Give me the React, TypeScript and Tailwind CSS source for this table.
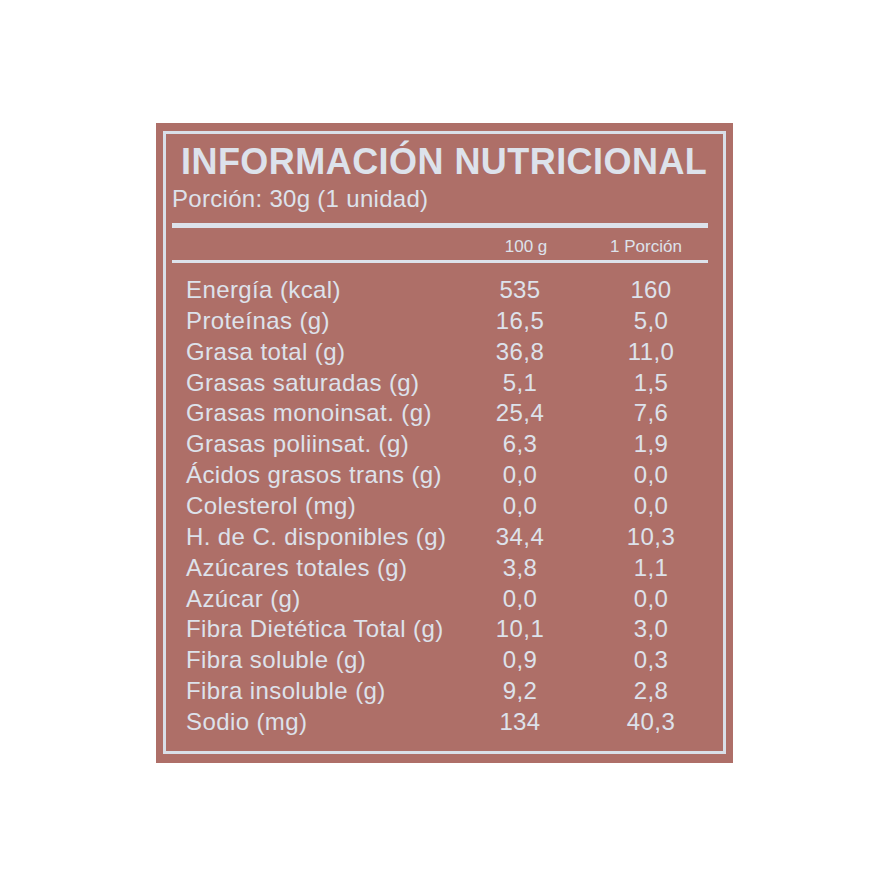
const rows: [string, string, string][] = [
  ["Energía (kcal)", "535", "160"],
  ["Proteínas (g)", "16,5", "5,0"],
  ["Grasa total (g)", "36,8", "11,0"],
  ["Grasas saturadas (g)", "5,1", "1,5"],
  ["Grasas monoinsat. (g)", "25,4", "7,6"],
  ["Grasas poliinsat. (g)", "6,3", "1,9"],
  ["Ácidos grasos trans (g)", "0,0", "0,0"],
  ["Colesterol (mg)", "0,0", "0,0"],
  ["H. de C. disponibles (g)", "34,4", "10,3"],
  ["Azúcares totales (g)", "3,8", "1,1"],
  ["Azúcar (g)", "0,0", "0,0"],
  ["Fibra Dietética Total (g)", "10,1", "3,0"],
  ["Fibra soluble (g)", "0,9", "0,3"],
  ["Fibra insoluble (g)", "9,2", "2,8"],
  ["Sodio (mg)", "134", "40,3"],
]

export default function App() {
  return (
    <div
      className="min-h-[886px] bg-white pl-[156px] pt-[123px]"
      style={{ fontFamily: '"Liberation Sans", Arial, sans-serif' }}
    >
      <div className="w-[577px] bg-[#ae6f68] px-[7px] pt-[8px] pb-[9px]">
        <div className="border-[3px] border-[#d9dfe8] pl-[6px] pr-[15px] pt-[10px] pb-[13px] text-[#dde2eb]">
          <h1 className="ml-[9px] whitespace-nowrap text-[36px] font-bold leading-none tracking-[0.45px]">
            INFORMACIÓN NUTRICIONAL
          </h1>
          <p className="mt-[7px] text-[24px] leading-none tracking-[0.3px]">Porción: 30g (1 unidad)</p>
          <div className="mt-[12px] h-[5px] bg-[#dde2eb]" />
          <div className="mt-[10px] flex text-[17px] leading-none">
            <span className="ml-[284px] w-[140px] text-center">100 g</span>
            <span className="w-[100px] text-center">1 Porción</span>
          </div>
          <div className="mt-[5px] h-[3px] bg-[#dde2eb]" />
          <div className="mt-[12px] flex flex-col pl-[14px]">
            {rows.map(([label, a, b]) => (
              <div key={label} className="flex text-[24px] leading-[30.86px] tracking-[0.4px]">
                <span className="w-[284px]">{label}</span>
                <span className="w-[100px] text-center">{a}</span>
                <span className="ml-[31px] w-[100px] text-center">{b}</span>
              </div>
            ))}
          </div>
        </div>
      </div>
    </div>
  )
}
